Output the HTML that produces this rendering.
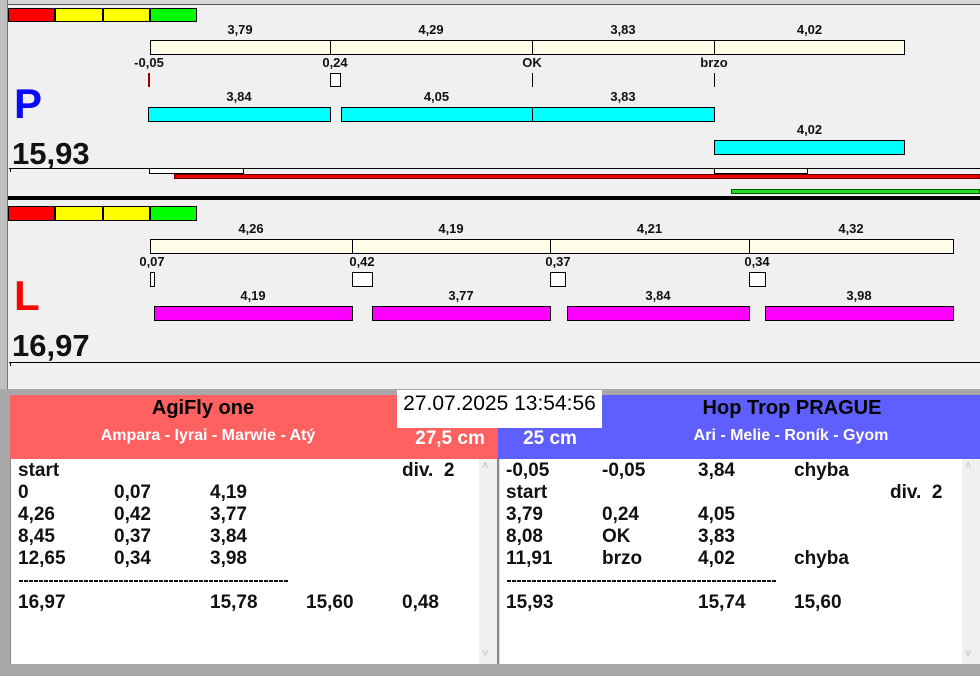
<!DOCTYPE html>
<html><head><meta charset="utf-8"><style>
*{margin:0;padding:0;box-sizing:border-box}
body{width:980px;height:676px;overflow:hidden;background:#f0f0f0;position:relative;font-family:"Liberation Sans",Arial,sans-serif}
div{position:absolute}
.b{border:1px solid #000}
.c{background:#fffde8}
.cy{background:#00ffff}
.mg{background:#ff00ff}
.lb{font-weight:bold;font-size:13px;text-align:center;color:#111;line-height:14px}
.t{font-weight:bold;font-size:19px;line-height:22px;color:#111;white-space:nowrap}
.d{height:2px;background:repeating-linear-gradient(90deg,#111 0 4px,transparent 4px 5px)}
</style></head><body>
<div style="left:0;top:0;width:980px;height:5px;background:#d8d8d8;border-bottom:1px solid #555"></div>
<div style="left:0;top:0;width:8px;height:390px;background:#c0c0c0;border-right:1px solid #777"></div>

<!-- P panel -->
<div style="left:8px;top:8px;width:47px;height:14px;background:#f00;border:1px solid #000"></div>
<div style="left:55px;top:8px;width:48px;height:14px;background:#ff0;border:1px solid #000"></div>
<div style="left:103px;top:8px;width:47px;height:14px;background:#ff0;border:1px solid #000"></div>
<div style="left:150px;top:8px;width:47px;height:14px;background:#0f0;border:1px solid #000"></div>

<div class="lb" style="left:150px;top:23px;width:180px">3,79</div>
<div class="lb" style="left:330px;top:23px;width:202px">4,29</div>
<div class="lb" style="left:532px;top:23px;width:182px">3,83</div>
<div class="lb" style="left:714px;top:23px;width:191px">4,02</div>
<div class="b c" style="left:150px;top:40px;width:181px;height:15px"></div>
<div class="b c" style="left:330px;top:40px;width:203px;height:15px"></div>
<div class="b c" style="left:532px;top:40px;width:183px;height:15px"></div>
<div class="b c" style="left:714px;top:40px;width:191px;height:15px"></div>
<div class="lb" style="left:119px;top:56px;width:60px">-0,05</div>
<div class="lb" style="left:305px;top:56px;width:60px">0,24</div>
<div class="lb" style="left:502px;top:56px;width:60px">OK</div>
<div class="lb" style="left:684px;top:56px;width:60px">brzo</div>
<div style="left:148px;top:73px;width:2px;height:14px;background:#900"></div>
<div class="b" style="left:330px;top:73px;width:11px;height:14px;background:#fff"></div>
<div style="left:532px;top:73px;width:1px;height:14px;background:#000"></div>
<div style="left:714px;top:73px;width:1px;height:14px;background:#000"></div>
<div class="lb" style="left:148px;top:90px;width:182px">3,84</div>
<div class="lb" style="left:341px;top:90px;width:191px">4,05</div>
<div class="lb" style="left:532px;top:90px;width:182px">3,83</div>
<div class="b cy" style="left:148px;top:107px;width:183px;height:15px"></div>
<div class="b cy" style="left:341px;top:107px;width:192px;height:15px"></div>
<div class="b cy" style="left:532px;top:107px;width:183px;height:15px"></div>
<div class="lb" style="left:714px;top:123px;width:191px">4,02</div>
<div class="b cy" style="left:714px;top:140px;width:191px;height:15px"></div>
<div style="left:14px;top:80px;font-size:42px;font-weight:bold;color:#0a0aff;line-height:48px">P</div>
<div style="left:12px;top:136px;font-size:31px;font-weight:bold;color:#111;line-height:36px">15,93</div>
<div style="left:9px;top:168px;width:971px;height:1px;background:#000"></div>
<div style="left:10px;top:168px;width:1px;height:4px;background:#000"></div>
<div class="b" style="left:149px;top:168px;width:95px;height:6px;background:#fff"></div>
<div class="b" style="left:714px;top:168px;width:94px;height:6px;background:#fff"></div>
<div style="left:174px;top:174px;width:806px;height:5px;background:#e00;border:1px solid #600"></div>
<div style="left:731px;top:189px;width:249px;height:5px;background:#2d2;border:1px solid #050"></div>
<div style="left:8px;top:196px;width:972px;height:4px;background:#000"></div>

<!-- L panel -->
<div style="left:8px;top:206px;width:47px;height:15px;background:#f00;border:1px solid #000"></div>
<div style="left:55px;top:206px;width:48px;height:15px;background:#ff0;border:1px solid #000"></div>
<div style="left:103px;top:206px;width:47px;height:15px;background:#ff0;border:1px solid #000"></div>
<div style="left:150px;top:206px;width:47px;height:15px;background:#0f0;border:1px solid #000"></div>
<div class="lb" style="left:150px;top:222px;width:202px">4,26</div>
<div class="lb" style="left:352px;top:222px;width:198px">4,19</div>
<div class="lb" style="left:550px;top:222px;width:199px">4,21</div>
<div class="lb" style="left:749px;top:222px;width:204px">4,32</div>
<div class="b c" style="left:150px;top:239px;width:203px;height:15px"></div>
<div class="b c" style="left:352px;top:239px;width:199px;height:15px"></div>
<div class="b c" style="left:550px;top:239px;width:200px;height:15px"></div>
<div class="b c" style="left:749px;top:239px;width:205px;height:15px"></div>
<div class="lb" style="left:122px;top:255px;width:60px">0,07</div>
<div class="lb" style="left:332px;top:255px;width:60px">0,42</div>
<div class="lb" style="left:528px;top:255px;width:60px">0,37</div>
<div class="lb" style="left:727px;top:255px;width:60px">0,34</div>
<div class="b" style="left:150px;top:272px;width:5px;height:15px;background:#fff"></div>
<div class="b" style="left:352px;top:272px;width:21px;height:15px;background:#fff"></div>
<div class="b" style="left:550px;top:272px;width:16px;height:15px;background:#fff"></div>
<div class="b" style="left:749px;top:272px;width:17px;height:15px;background:#fff"></div>
<div class="lb" style="left:154px;top:289px;width:198px">4,19</div>
<div class="lb" style="left:372px;top:289px;width:178px">3,77</div>
<div class="lb" style="left:567px;top:289px;width:182px">3,84</div>
<div class="lb" style="left:765px;top:289px;width:188px">3,98</div>
<div class="b mg" style="left:154px;top:306px;width:199px;height:15px"></div>
<div class="b mg" style="left:372px;top:306px;width:179px;height:15px"></div>
<div class="b mg" style="left:567px;top:306px;width:183px;height:15px"></div>
<div class="b mg" style="left:765px;top:306px;width:189px;height:15px"></div>
<div style="left:14px;top:272px;font-size:42px;font-weight:bold;color:#f00;line-height:48px">L</div>
<div style="left:12px;top:328px;font-size:31px;font-weight:bold;color:#111;line-height:36px">16,97</div>
<div style="left:9px;top:362px;width:971px;height:1px;background:#000"></div>
<div style="left:10px;top:362px;width:1px;height:4px;background:#000"></div>

<!-- bottom -->
<div style="left:0;top:389px;width:980px;height:287px;background:#a8a8a8"></div>
<div style="left:10px;top:395px;width:488px;height:64px;background:#ff6060"></div>
<div style="left:498px;top:395px;width:482px;height:64px;background:#5f5fff"></div>
<div style="left:10px;top:396px;width:386px;text-align:center;font-size:20px;font-weight:bold;color:#000;line-height:24px">AgiFly one</div>
<div style="left:10px;top:427px;width:396px;text-align:center;font-size:16px;font-weight:bold;color:#fff;line-height:18px">Ampara - Iyrai - Marwie - Atý</div>
<div style="left:397px;top:390px;width:205px;height:38px;background:#fff;font-size:21px;color:#000;line-height:28px;text-align:center">27.07.2025 13:54:56</div>
<div style="left:401px;top:427px;width:98px;text-align:center;font-size:19px;font-weight:bold;color:#fff;line-height:24px">27,5 cm</div>
<div style="left:498px;top:427px;width:104px;text-align:center;font-size:19px;font-weight:bold;color:#fff;line-height:24px">25 cm</div>
<div style="left:602px;top:396px;width:380px;text-align:center;font-size:20px;font-weight:bold;color:#000;line-height:24px">Hop Trop PRAGUE</div>
<div style="left:602px;top:427px;width:378px;text-align:center;font-size:16px;font-weight:bold;color:#fff;line-height:18px">Ari - Melie - Roník - Gyom</div>

<div style="left:10px;top:459px;width:487px;height:205px;background:#fff;border-left:1px solid #888"></div>
<div style="left:479px;top:459px;width:18px;height:205px;background:#f0f0f0"></div>
<div style="left:497px;top:459px;width:3px;height:205px;background:#888;border-right:1px solid #ddd"></div>
<div style="left:500px;top:459px;width:480px;height:205px;background:#fff"></div>
<div style="left:962px;top:459px;width:18px;height:205px;background:#f0f0f0"></div>
<div style="left:482px;top:460px;font-size:11px;color:#bbb">˄</div>
<div style="left:482px;top:648px;font-size:11px;color:#bbb">˅</div>
<div style="left:965px;top:460px;font-size:11px;color:#bbb">˄</div>
<div style="left:965px;top:648px;font-size:11px;color:#bbb">˅</div>

<div class="t" style="left:18px;top:460px">start</div><div class="t" style="left:402px;top:460px">div.&nbsp; 2</div>
<div class="t" style="left:18px;top:482px">0</div><div class="t" style="left:114px;top:482px">0,07</div><div class="t" style="left:210px;top:482px">4,19</div>
<div class="t" style="left:18px;top:504px">4,26</div><div class="t" style="left:114px;top:504px">0,42</div><div class="t" style="left:210px;top:504px">3,77</div>
<div class="t" style="left:18px;top:526px">8,45</div><div class="t" style="left:114px;top:526px">0,37</div><div class="t" style="left:210px;top:526px">3,84</div>
<div class="t" style="left:18px;top:548px">12,65</div><div class="t" style="left:114px;top:548px">0,34</div><div class="t" style="left:210px;top:548px">3,98</div>
<div class="d" style="left:19px;top:580px;width:269px"></div>
<div class="t" style="left:18px;top:592px">16,97</div><div class="t" style="left:210px;top:592px">15,78</div><div class="t" style="left:306px;top:592px">15,60</div><div class="t" style="left:402px;top:592px">0,48</div>

<div class="t" style="left:506px;top:460px">-0,05</div><div class="t" style="left:602px;top:460px">-0,05</div><div class="t" style="left:698px;top:460px">3,84</div><div class="t" style="left:794px;top:460px">chyba</div>
<div class="t" style="left:506px;top:482px">start</div><div class="t" style="left:890px;top:482px">div.&nbsp; 2</div>
<div class="t" style="left:506px;top:504px">3,79</div><div class="t" style="left:602px;top:504px">0,24</div><div class="t" style="left:698px;top:504px">4,05</div>
<div class="t" style="left:506px;top:526px">8,08</div><div class="t" style="left:602px;top:526px">OK</div><div class="t" style="left:698px;top:526px">3,83</div>
<div class="t" style="left:506px;top:548px">11,91</div><div class="t" style="left:602px;top:548px">brzo</div><div class="t" style="left:698px;top:548px">4,02</div><div class="t" style="left:794px;top:548px">chyba</div>
<div class="d" style="left:507px;top:580px;width:269px"></div>
<div class="t" style="left:506px;top:592px">15,93</div><div class="t" style="left:698px;top:592px">15,74</div><div class="t" style="left:794px;top:592px">15,60</div>
</body></html>
